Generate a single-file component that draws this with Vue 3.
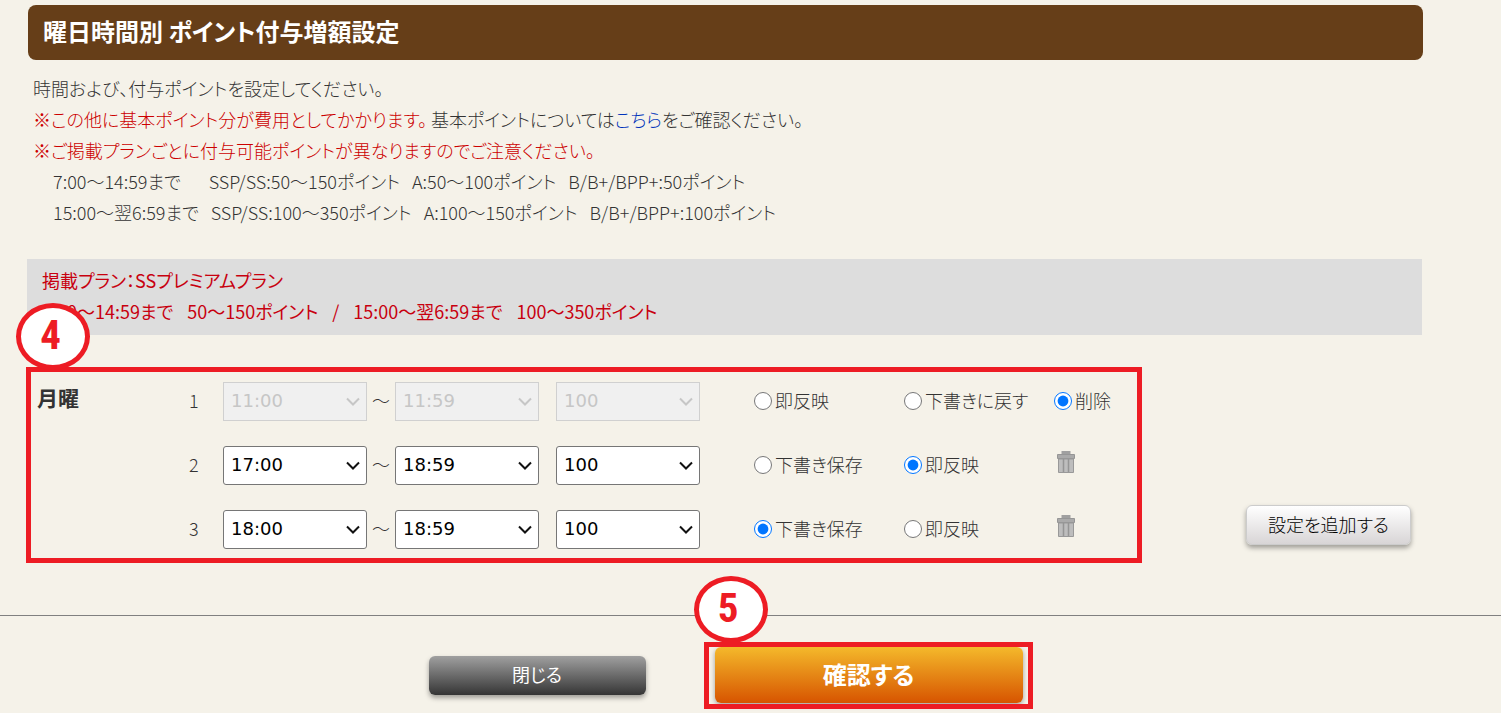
<script setup>
import { reactive } from 'vue'

const rows = reactive([
  {
    id: 1, from: '11:00', to: '11:59', point: '100', disabled: true, state: 'delete',
    options: [
      { value: 'apply', label: '即反映' },
      { value: 'draft', label: '下書きに戻す' },
      { value: 'delete', label: '削除' },
    ],
  },
  {
    id: 2, from: '17:00', to: '18:59', point: '100', disabled: false, state: 'apply',
    options: [
      { value: 'draft', label: '下書き保存' },
      { value: 'apply', label: '即反映' },
    ],
  },
  {
    id: 3, from: '18:00', to: '18:59', point: '100', disabled: false, state: 'draft',
    options: [
      { value: 'draft', label: '下書き保存' },
      { value: 'apply', label: '即反映' },
    ],
  },
])

const fields = [
  { key: 'from', label: '開始時間' },
  { key: 'to', label: '終了時間' },
  { key: 'point', label: 'ポイント' },
]
</script>

<template>
  <div class="page">
    <main class="content">
      <h1 class="title">曜日時間別 ポイント付与増額設定</h1>

      <div class="intro">
        <p>時間および、付与ポイントを設定してください。</p>
        <p><span class="warn">※この他に基本ポイント分が費用としてかかります。</span> 基本ポイントについては<a href="#">こちら</a>をご確認ください。</p>
        <p class="warn">※ご掲載プランごとに付与可能ポイントが異なりますのでご注意ください。</p>
        <dl class="ranges">
          <div><dt class="first">7:00～14:59まで</dt><dd>SSP/SS:50～150ポイント</dd><dd>A:50～100ポイント</dd><dd>B/B+/BPP+:50ポイント</dd></div>
          <div><dt>15:00～翌6:59まで</dt><dd>SSP/SS:100～350ポイント</dd><dd>A:100～150ポイント</dd><dd>B/B+/BPP+:100ポイント</dd></div>
        </dl>
      </div>

      <section class="plan">
        <p>掲載プラン：SSプレミアムプラン</p>
        <p class="plan-ranges"><span>7:00～14:59まで</span><span>50～150ポイント</span><span>/</span><span>15:00～翌6:59まで</span><span>100～350ポイント</span></p>
      </section>

      <div class="schedule">
        <section class="day">
          <span class="step">4</span>
          <h2>月曜</h2>
          <div class="rows">
            <div v-for="row in rows" :key="row.id" class="row">
              <span class="num">{{ row.id }}</span>
              <template v-for="field in fields" :key="field.key">
                <span v-if="field.key === 'to'" class="tilde">～</span>
                <span class="select" :class="{ disabled: row.disabled, point: field.key === 'point' }">
                  <select v-model="row[field.key]" :disabled="row.disabled" :aria-label="field.label">
                    <option>{{ row[field.key] }}</option>
                  </select>
                  <svg viewBox="0 0 14 10" aria-hidden="true"><path d="M1 1.5 7 7.5 13 1.5" /></svg>
                </span>
              </template>
              <div class="options">
                <label v-for="option in row.options" :key="option.value">
                  <input v-model="row.state" type="radio" :name="'state' + row.id" :value="option.value">{{ option.label }}
                </label>
                <button v-if="row.options.length < 3" class="trash" type="button" aria-label="削除">
                  <svg viewBox="0 0 20 24" aria-hidden="true">
                    <path fill="#a0a0a0" d="M5.500 1h9v4h-9z" />
                    <path fill="#aaa" stroke="#969696" d="M1.500 4.500h17v4h-17z" />
                    <path fill="#bdbdbd" stroke="#999" d="M2.500 9h15v13.500h-15z" />
                    <path fill="none" stroke="#959595" stroke-width="1.500" d="M7.500 9v13M12.500 9v13" />
                  </svg>
                </button>
              </div>
            </div>
          </div>
        </section>
        <button class="add" type="button">設定を追加する</button>
      </div>
    </main>

    <footer>
      <button class="close" type="button">閉じる</button>
      <div class="confirm-wrap">
        <span class="step">5</span>
        <button class="confirm" type="button">確認する</button>
      </div>
    </footer>
  </div>
</template>

<style>
body {
  margin: 0;
  background: #f5f2e9;
}
</style>

<style scoped>
* {
  box-sizing: border-box;
}
.page {
  color: #333;
  font: 300 18px/31px "Noto Sans CJK JP", sans-serif;
  font-feature-settings: "palt";
  overflow: hidden;
}
h1, h2, p, dl, dd {
  margin: 0;
}
button {
  font-family: inherit;
  font-feature-settings: inherit;
  cursor: pointer;
}
.content {
  padding: 5px 78px 0 28px;
}
.title {
  padding: 10px 15px 14px;
  border-radius: 8px;
  background: #663e18;
  color: #fff;
  font-size: 24px;
  font-weight: 700;
}
.intro {
  padding: 13px 5px 31px;
}
.warn {
  color: #c00;
}
a {
  color: #03b;
  text-decoration: none;
}
.ranges {
  padding-left: 20px;
}
.ranges div {
  display: flex;
  gap: 12px;
}
.ranges .first {
  margin-right: 16px;
}
.plan {
  margin: 0 1px 0 -1px;
  padding: 6px 15px 8px;
  background: #ddd;
  color: #c8000f;
  font-weight: 400;
}
.plan-ranges {
  display: flex;
  gap: 14px;
}
.schedule {
  display: flex;
  align-items: flex-end;
  justify-content: space-between;
  margin: 32px 0 0 -2px;
}
.day {
  position: relative;
  display: flex;
  border: 5px solid #ed1c24;
  padding: 10px 25px 9px 6px;
}
.day h2 {
  width: 152px;
  font-size: 21px;
  font-weight: 700;
}
.rows {
  display: grid;
  gap: 25px;
}
.row {
  display: flex;
  align-items: center;
}
.num {
  width: 34px;
  padding-bottom: 2px;
}
.tilde {
  width: 28px;
  padding-bottom: 2px;
  text-align: center;
}
.select {
  position: relative;
  width: 144px;
  height: 39px;
}
.select.point {
  margin-left: 17px;
}
select {
  appearance: none;
  width: 100%;
  height: 100%;
  padding: 0 28px 2px 7px;
  border: 1px solid #767676;
  border-radius: 3px;
  background: #fff;
  color: #000;
  font: 18px "DejaVu Sans", sans-serif;
}
.disabled select {
  border-color: #d0d0d0;
  border-radius: 0;
  background: #f0f0f0;
  color: #c6c6c6;
  opacity: 1;
}
.select svg {
  position: absolute;
  top: 15px;
  right: 7px;
  width: 14px;
  height: 10px;
  fill: none;
  stroke: #111;
  stroke-width: 2;
  pointer-events: none;
}
.select.disabled svg {
  stroke: #c6c6c6;
}
.options {
  display: grid;
  grid-template-columns: 150px 150px 58px;
  align-items: center;
  margin-left: 54px;
}
label {
  display: flex;
  align-items: center;
  gap: 3px;
  padding-bottom: 2px;
  white-space: nowrap;
}
input {
  flex: none;
  width: 18px;
  height: 18px;
  margin: 0;
  accent-color: #0075ff;
}
.trash {
  display: flex;
  width: 24px;
  padding: 0 2px 7px;
  border: 0;
  background: none;
}
.trash svg {
  width: 20px;
  height: 24px;
}
.add {
  height: 40px;
  width: 165px;
  margin: 0 12px 18px 0;
  padding: 0 0 2px;
  border: 1px solid #ccc;
  border-radius: 6px;
  background: linear-gradient(#fff, #d8d5d6);
  box-shadow: 0 3px 5px rgb(0 0 0 / 35%);
  color: #000;
  font-size: 18px;
  font-weight: 300;
}
footer {
  display: flex;
  align-items: center;
  justify-content: center;
  gap: 69px;
  margin-top: 52px;
  padding: 31px 78px 10px 28px;
  border-top: 1px solid #808080;
}
.close {
  width: 217px;
  height: 39px;
  padding: 0 0 2px;
  border: 0;
  border-radius: 6px;
  background: linear-gradient(#a0a0a0, #353535);
  box-shadow: 0 3px 5px rgb(0 0 0 / 35%);
  color: #fff;
  font-size: 18px;
  font-weight: 400;
}
.confirm-wrap {
  position: relative;
}
.confirm-wrap::after {
  content: "";
  position: absolute;
  inset: -5px -10px -6px -11px;
  border: 5px solid #ed1c24;
  pointer-events: none;
}
.confirm {
  display: block;
  width: 308px;
  height: 56px;
  padding: 0 0 4px;
  border: 0;
  border-radius: 6px;
  background: linear-gradient(#f4b92b, #d75400);
  box-shadow: 0 2px 5px rgb(0 0 0 / 35%);
  color: #fff;
  font-size: 24px;
  font-weight: 700;
}
.step {
  position: absolute;
  display: grid;
  place-items: center;
  width: 74px;
  height: 67px;
  padding: 0 5px 2px 0;
  border: 5px solid #ed1c24;
  border-radius: 50%;
  background: #fff;
  color: #ed1c24;
  font: 700 41px/41px "Liberation Sans Narrow", "Roboto Condensed", "Noto Sans CJK JP", sans-serif;
}
.day .step {
  top: -69px;
  left: -15px;
}
.confirm-wrap .step {
  top: -71px;
  left: -21px;
}
</style>
